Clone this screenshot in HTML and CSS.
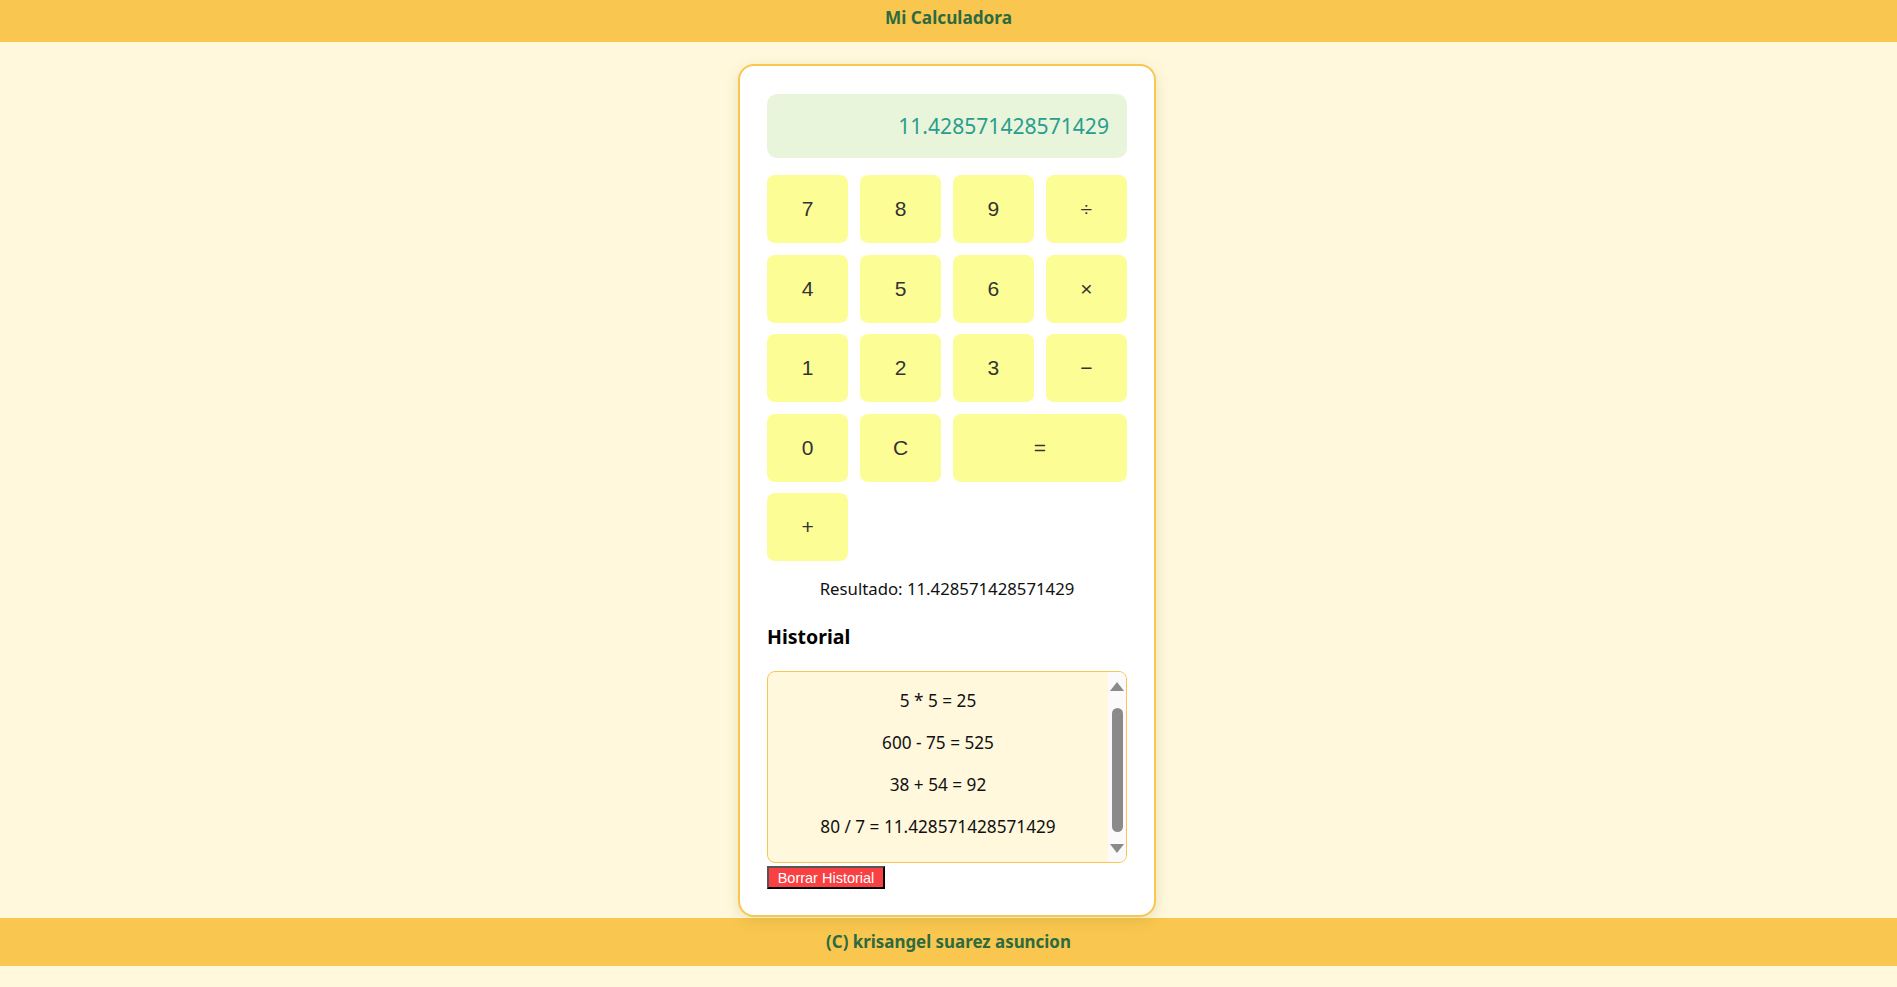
FILE: index.html
```html
<!DOCTYPE html>
<html lang="es">
<head>
<meta charset="utf-8">
<title>Mi Calculadora</title>
<link rel="stylesheet" href="styles.css">
</head>
<body>
<header class="top-bar">Mi Calculadora</header>
<main class="page">
  <div class="card">
    <div class="display">11.428571428571429</div>
    <div class="keys">
      <button class="key">7</button>
      <button class="key">8</button>
      <button class="key">9</button>
      <button class="key">÷</button>
      <button class="key">4</button>
      <button class="key">5</button>
      <button class="key">6</button>
      <button class="key">×</button>
      <button class="key">1</button>
      <button class="key">2</button>
      <button class="key">3</button>
      <button class="key">−</button>
      <button class="key">0</button>
      <button class="key">C</button>
      <button class="key key-wide">=</button>
      <button class="key">+</button>
    </div>
    <p class="result">Resultado: 11.428571428571429</p>
    <h3 class="hist-title">Historial</h3>
    <div class="hist">
      <div class="hist-list">
        <p class="hist-item">5 * 5 = 25</p>
        <p class="hist-item">600 - 75 = 525</p>
        <p class="hist-item">38 + 54 = 92</p>
        <p class="hist-item">80 / 7 = 11.428571428571429</p>
      </div>
      <div class="scrollbar">
        <svg class="arrow arrow-up" width="14" height="9" viewBox="0 0 14 9"><polygon points="7,0 14,9 0,9"/></svg>
        <div class="thumb"></div>
        <svg class="arrow arrow-down" width="14" height="9" viewBox="0 0 14 9"><polygon points="0,0 14,0 7,9"/></svg>
      </div>
    </div>
    <button class="clear">Borrar Historial</button>
  </div>
</main>
<footer class="bottom-bar">(C) krisangel suarez asuncion</footer>
</body>
</html>
```
FILE: styles.css
```css
* { box-sizing: border-box; }
html, body { margin: 0; padding: 0; }
body {
  background: #fff8dc;
  font-family: "Noto Sans", "Open Sans", sans-serif;
  color: #111;
}
.top-bar {
  height: 42px;
  line-height: 36px;
  background: #f9c74f;
  color: #2d6a3f;
  font-weight: 700;
  font-size: 17.2px;
  text-align: center;
}
.page {
  display: flex;
  justify-content: center;
  padding: 22px 3px 1px 0;
}
.card {
  width: 418px;
  background: #fff;
  border: 2px solid #f9c74f;
  border-radius: 16px;
  padding: 28px 27px 26px;
  box-shadow: 0 4px 14px rgba(140, 120, 40, 0.18);
  display: flex;
  flex-direction: column;
}
.display {
  height: 64px;
  background: #e9f5db;
  border-radius: 10px;
  color: #2a9d8f;
  font-size: 21.1px;
  line-height: 64px;
  text-align: right;
  padding-right: 18px;
}
.keys {
  margin-top: 17px;
  display: grid;
  grid-template-columns: repeat(4, 1fr);
  grid-auto-rows: 68px;
  gap: 11.5px;
}
.key {
  border: none;
  border-radius: 8px;
  background: #fdfd96;
  color: #333;
  font-family: "Liberation Sans", Arial, sans-serif;
  font-size: 21px;
  padding: 0;
}
.key-wide { grid-column: span 2; }
.result {
  margin: 16px 0 0;
  line-height: 24px;
  font-size: 16.75px;
  text-align: center;
}
.hist-title {
  margin: 22px 0 0;
  line-height: 28px;
  font-size: 19.5px;
  font-weight: 700;
  color: #000;
}
.hist {
  margin-top: 20px;
  height: 192px;
  border: 1px solid #f9c74f;
  border-radius: 8px;
  background: #fff8dc;
  display: flex;
  overflow: hidden;
}
.hist-list {
  flex: 1;
  display: flex;
  flex-direction: column;
  gap: 18px;
  padding-top: 17px;
}
.hist-item {
  margin: 0;
  line-height: 24px;
  font-size: 17.2px;
  text-align: center;
  color: #111;
}
.scrollbar {
  width: 18px;
  background: #fafafa;
  display: flex;
  flex-direction: column;
  align-items: center;
  padding-top: 10px;
}
.arrow { fill: #8a8a8a; display: block; }
.thumb {
  margin-top: 17px;
  width: 11px;
  height: 124px;
  border-radius: 6px;
  background: #8a8a8a;
}
.arrow-down { margin-top: 12px; }
.clear {
  align-self: flex-start;
  margin-top: 3px;
  height: 23px;
  padding: 0 6px;
  background: #f94144;
  color: #fff;
  border: 2px solid #000;
  border-color: #555 #000 #000 #555;
  font-family: "Liberation Sans", Arial, sans-serif;
  font-size: 14.5px;
  width: 118px;
}
.bottom-bar {
  height: 48px;
  line-height: 48px;
  margin-bottom: 21px;
  background: #f9c74f;
  color: #2d6a3f;
  font-weight: 700;
  font-size: 16.9px;
  text-align: center;
}
```
